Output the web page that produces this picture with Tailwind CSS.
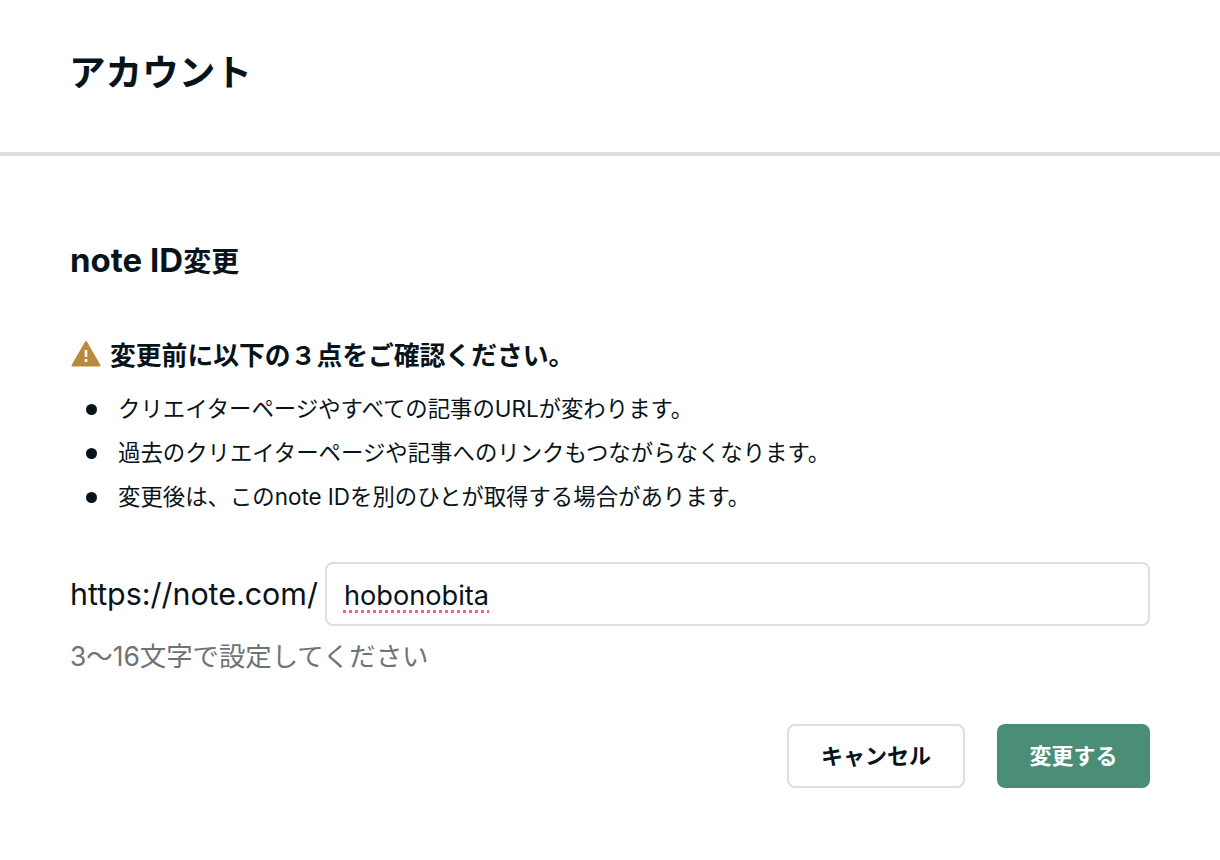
<!doctype html>
<html lang="ja">
<head>
<meta charset="utf-8">
<script src="https://cdn.jsdelivr.net/npm/@tailwindcss/browser@4"></script>
</head>
<body class="bg-white text-[#08131a] font-['Inter','Noto_Sans_CJK_JP',sans-serif]">
<div class="w-[1220px] h-[860px] overflow-hidden">
  <header class="h-[156px] border-b-4 border-[#dedede] pl-[69px] pt-[47px]">
    <h1 class="text-[36.6px] leading-[52px] font-bold">アカウント</h1>
  </header>
  <main class="px-[70px] pt-[82px]">
    <h2 class="text-[28px] leading-[44px] font-bold"><span class="text-[33px]">note ID</span>変更</h2>
    <div class="mt-[54px] flex items-center gap-[8px]">
      <svg class="w-[32px] h-[28px] -mt-[5px]" viewBox="0 0 32 28"><path d="M16 2 L29.5 25.5 H2.5 Z" fill="#b98a3e" stroke="#b98a3e" stroke-width="2" stroke-linejoin="round"/><rect x="14.7" y="10" width="2.6" height="7" fill="#fff"/><rect x="14.7" y="19" width="2.6" height="3" fill="#fff"/></svg>
      <p class="text-[25.8px] leading-[36px] font-bold">変更前に以下の３点をご確認ください。</p>
    </div>
    <ul class="mt-[13px] text-[22.4px] leading-[44px]">
      <li class="flex items-center"><span class="w-[11px] h-[11px] rounded-full bg-[#08131a] ml-[16px] mr-[21px]"></span>クリエイターページやすべての記事のURLが変わります。</li>
      <li class="flex items-center"><span class="w-[11px] h-[11px] rounded-full bg-[#08131a] ml-[16px] mr-[21px]"></span>過去のクリエイターページや記事へのリンクもつながらなくなります。</li>
      <li class="flex items-center"><span class="w-[11px] h-[11px] rounded-full bg-[#08131a] ml-[16px] mr-[21px]"></span>変更後は、このnote IDを別のひとが取得する場合があります。</li>
    </ul>
    <div class="mt-[43px] flex items-center gap-[7px]">
      <span class="text-[30.4px] leading-[44px]">https://note.com/</span>
      <div class="w-[826px] h-[64px] border-2 border-[#dedede] rounded-[8px] px-[17px] pt-[4px] flex items-center text-[27.2px]">
        <span class="underline decoration-dotted decoration-[#f06a6a] decoration-[3px] underline-offset-[5px]">hobonobita</span>
      </div>
    </div>
    <p class="mt-[8px] text-[26.4px] leading-[44px] text-[#6f7375]">3〜16文字で設定してください</p>
    <div class="mt-[46px] flex justify-end gap-[32px]">
      <button class="w-[178px] h-[64px] border-2 border-[#dedede] rounded-[8px] text-[22px] font-bold">キャンセル</button>
      <button class="w-[153px] h-[64px] bg-[#4a8e78] rounded-[8px] text-[22px] font-bold text-white">変更する</button>
    </div>
  </main>
</div>
</body>
</html>
